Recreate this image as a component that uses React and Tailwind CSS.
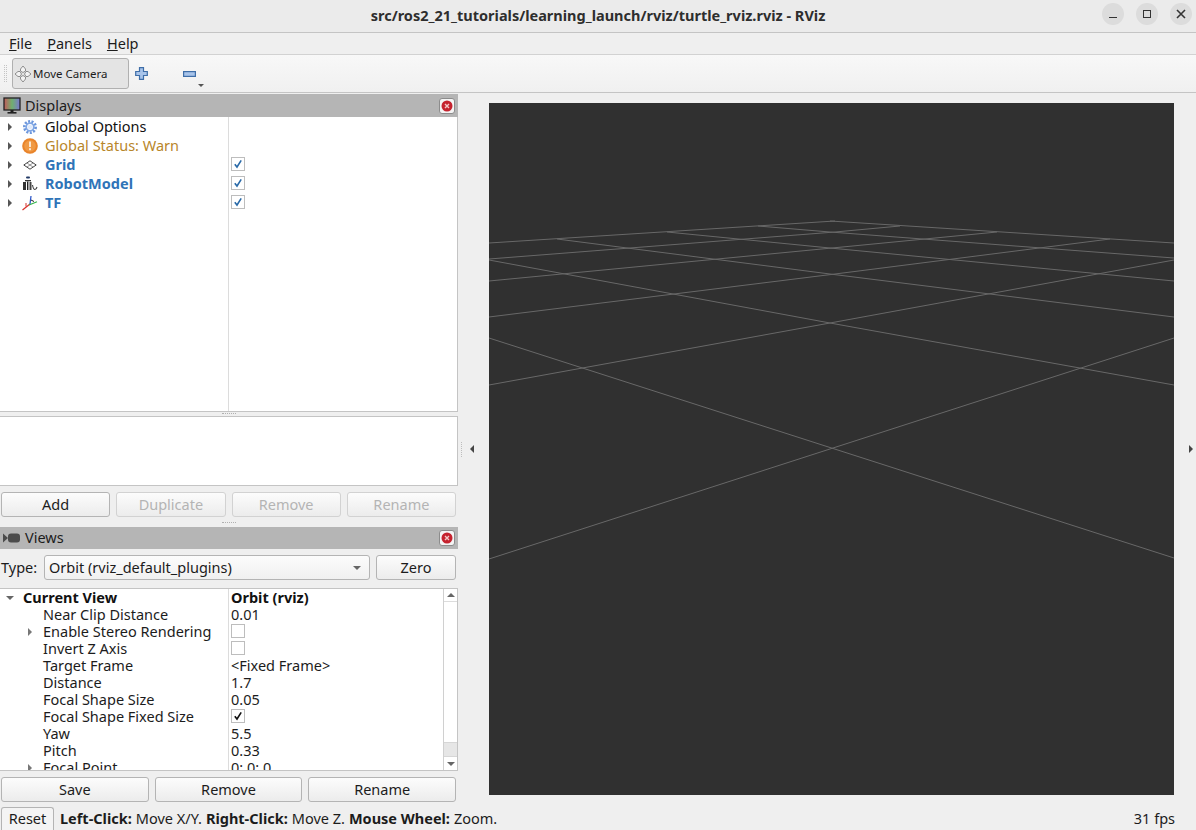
const font = "font-['Noto_Sans',sans-serif]";

const gridLines = [
  [489, 559, 1174, 338],
  [489, 338, 1174, 558],
  [489, 385, 830, 323],
  [830, 323, 1174, 260],
  [489, 317, 835, 274],
  [835, 274, 1110, 239],
  [489, 281, 832, 248],
  [832, 248, 997, 232],
  [489, 259, 835, 232],
  [835, 232, 900, 226],
  [489, 243, 835, 221],
  [489, 260, 830, 323],
  [830, 323, 1174, 385],
  [557, 239, 830, 274],
  [830, 274, 1174, 317],
  [667, 232, 830, 248],
  [830, 248, 1174, 281],
  [758, 226, 830, 232],
  [830, 232, 1174, 258],
  [830, 221, 1174, 243],
];

function MonitorIcon() {
  return (
    <svg width="18" height="18" viewBox="0 0 18 18" className="shrink-0">
      <defs>
        <linearGradient id="screen" x1="0" y1="0" x2="1" y2="0">
          <stop offset="0" stopColor="#c45a5a" />
          <stop offset="0.5" stopColor="#6fb06f" />
          <stop offset="1" stopColor="#7a78d0" />
        </linearGradient>
      </defs>
      <rect x="1" y="1" width="16" height="12" fill="url(#screen)" stroke="#222" strokeWidth="1.3" />
      <rect x="7.5" y="13" width="3" height="2" fill="#222" />
      <rect x="4.5" y="15" width="9" height="1.6" fill="#222" />
    </svg>
  );
}

function GearIcon() {
  return (
    <svg width="14" height="14" viewBox="0 0 14 14">
      <circle cx="7" cy="7" r="5.6" fill="none" stroke="#6d97dc" strokeWidth="2.8" strokeDasharray="2 1.4" />
      <circle cx="7" cy="7" r="3.8" fill="none" stroke="#7fa6e4" strokeWidth="1.8" />
      <circle cx="7" cy="7" r="2.2" fill="#dfe9f9" />
    </svg>
  );
}

function WarnIcon() {
  return (
    <svg width="16" height="16" viewBox="0 0 16 16">
      <circle cx="8" cy="8" r="7.8" fill="#e9842a" />
      <circle cx="8" cy="8" r="5.8" fill="#f09a45" />
      <rect x="7" y="3.5" width="2" height="5.5" fill="#fbe6cf" />
      <rect x="7" y="10.2" width="2" height="2" fill="#fbe6cf" />
    </svg>
  );
}

function GridIcon() {
  return (
    <svg width="14" height="10" viewBox="0 0 14 10">
      <path d="M7 .8 13.2 5 7 9.2.8 5Z" fill="none" stroke="#444" strokeWidth="1" />
      <path d="M4 3 10 7M10 3 4 7" fill="none" stroke="#777" strokeWidth="0.8" />
    </svg>
  );
}

function RobotIcon() {
  return (
    <svg width="16" height="15" viewBox="0 0 16 15">
      <rect x="4" y="0.5" width="4" height="2" rx="1" fill="#223a66" />
      <rect x="3" y="4" width="6" height="1.3" fill="#333" />
      <rect x="1" y="6" width="3" height="8" fill="#333" />
      <rect x="5" y="5.5" width="1.4" height="8.5" fill="#222" />
      <rect x="7.5" y="6" width="2" height="8" fill="#444" />
      <path d="M10.5 9c.5 3 1.5 4.5 2.5 4.5s1.6-1 2-2.5" fill="none" stroke="#444" strokeWidth="1.1" />
    </svg>
  );
}

function TfIcon() {
  return (
    <svg width="17" height="16" viewBox="0 0 17 16">
      <path d="M9 9 1.5 15" stroke="#d8302c" strokeWidth="1.2" fill="none" />
      <path d="M5 11.5 5 8" stroke="#d8302c" strokeWidth="1" fill="none" />
      <path d="M8 10 16 6.8" stroke="#35b54a" strokeWidth="1.2" fill="none" />
      <path d="M9 9 10 1" stroke="#2a55c8" strokeWidth="1.2" fill="none" />
      <path d="M10 5 13 6.5" stroke="#222" strokeWidth="1" fill="none" />
    </svg>
  );
}

function CloseBadge() {
  return (
    <div className="flex h-[16px] w-[16px] items-center justify-center rounded-[3px] border border-[#8c8c8c] bg-[#f4f4f4]">
      <svg width="12" height="12" viewBox="0 0 12 12">
        <circle cx="6" cy="6" r="5.5" fill="#c5222e" />
        <path d="M4 4 8 8M8 4 4 8" stroke="#f3c7c7" strokeWidth="1.4" />
      </svg>
    </div>
  );
}

function MoveIcon() {
  return (
    <svg width="18" height="18" viewBox="0 0 18 18" className="shrink-0">
      <path d="M6.5 4 9 1l2.5 3v2L9 7.5 6.5 6Z" fill="#f3f3f3" stroke="#777" strokeWidth="0.8" />
      <path d="M6.5 14 9 17l2.5-3v-2L9 10.5 6.5 12Z" fill="#f3f3f3" stroke="#777" strokeWidth="0.8" />
      <path d="M4 6.5 1 9l3 2.5h2L7.5 9 6 6.5Z" fill="#f3f3f3" stroke="#777" strokeWidth="0.8" />
      <path d="M14 6.5 17 9l-3 2.5h-2L10.5 9 12 6.5Z" fill="#f3f3f3" stroke="#777" strokeWidth="0.8" />
    </svg>
  );
}

function Arrow({ down, className = "" }) {
  if (down) {
    return <div className={"h-0 w-0 border-x-[4px] border-t-[4px] border-x-transparent border-t-[#666] " + className} />;
  }
  return <div className={"h-0 w-0 border-y-[4px] border-l-[4px] border-y-transparent border-l-[#555] " + className} />;
}

function Check({ on, color = "#2a6aa8" }) {
  return (
    <div className="mb-[2px] flex h-[14px] w-[14px] items-center justify-center border border-[#bdbdbd] bg-white">
      {on && (
        <svg width="10" height="10" viewBox="0 0 10 10">
          <path d="M1.8 5.2 4 8 8.2 1.4" fill="none" stroke={color} strokeWidth="1.6" />
        </svg>
      )}
    </div>
  );
}

function Btn({ children, disabled, className = "" }) {
  return (
    <button
      className={
        "flex h-[25px] items-center justify-center rounded-[3px] border bg-gradient-to-b from-[#fcfcfc] to-[#ececec] text-[14.5px] " +
        (disabled ? "border-[#d2d2d2] text-[#b4b4b4] " : "border-[#b4b4b4] text-[#1c1c1c] ") +
        className
      }
    >
      {children}
    </button>
  );
}

function Splitter({ className = "" }) {
  return <div className={"w-[14px] border-t border-dotted border-[#b0b0b0] " + className} />;
}

function PanelHeader({ icon, title, className = "" }) {
  return (
    <div className={"flex items-center justify-between bg-[#b5b5b5] pl-[3px] pr-[3px] " + className}>
      <div className="flex items-center gap-[4px] text-[14.5px] text-[#1c1c1c]">
        {icon}
        <span>{title}</span>
      </div>
      <CloseBadge />
    </div>
  );
}

const displays = [
  { icon: <GearIcon />, label: "Global Options", cls: "text-[#111]" },
  { icon: <WarnIcon />, label: "Global Status: Warn", cls: "text-[#b8862a]" },
  { icon: <GridIcon />, label: "Grid", cls: "font-bold text-[#2f74b8]", check: true },
  { icon: <RobotIcon />, label: "RobotModel", cls: "font-bold text-[#2f74b8]", check: true },
  { icon: <TfIcon />, label: "TF", cls: "font-bold text-[#2f74b8]", check: true },
];

const views = [
  { label: "Near Clip Distance", value: "0.01" },
  { label: "Enable Stereo Rendering", arrow: true, box: "off" },
  { label: "Invert Z Axis", box: "off" },
  { label: "Target Frame", value: "<Fixed Frame>" },
  { label: "Distance", value: "1.7" },
  { label: "Focal Shape Size", value: "0.05" },
  { label: "Focal Shape Fixed Size", box: "on" },
  { label: "Yaw", value: "5.5" },
  { label: "Pitch", value: "0.33" },
  { label: "Focal Point", arrow: true, value: "0; 0; 0" },
];

function DisplaysPanel() {
  return (
    <>
      <PanelHeader icon={<MonitorIcon />} title="Displays" className="h-[23px]" />
      <div className="flex h-[295px] border-b border-r border-[#c4c4c4] bg-white text-[14.5px]">
        <div className="w-[229px] border-r border-[#dcdcdc]">
          {displays.map((d) => (
            <div key={d.label} className="flex h-[19px] items-center">
              <Arrow className="ml-[8px]" />
              <div className="flex w-[33px] shrink-0 items-center justify-center pl-[2px]">{d.icon}</div>
              <span className={d.cls}>{d.label}</span>
            </div>
          ))}
        </div>
        <div className="flex-1 pl-[2px]">
          {displays.map((d) => (
            <div key={d.label} className="flex h-[19px] items-center">
              {d.check && <Check on />}
            </div>
          ))}
        </div>
      </div>
    </>
  );
}

function ViewsTree() {
  return (
    <div className="flex h-[183px] overflow-hidden border border-l-0 border-[#c4c4c4] bg-white text-[14.5px] text-[#1c1c1c]">
      <div className="w-[229px] shrink-0 overflow-hidden border-r border-[#dcdcdc]">
        <div className="flex h-[17px] items-center font-bold text-[#111]">
          <Arrow down className="ml-[6px]" />
          <span className="ml-[9px]">Current View</span>
        </div>
        {views.map((v) => (
          <div key={v.label} className="relative flex h-[17px] items-center pl-[43px]">
            {v.arrow && <Arrow className="absolute left-[28px] top-[5px] border-l-[#777]" />}
            <span className="whitespace-nowrap">{v.label}</span>
          </div>
        ))}
      </div>
      <div className="flex-1 overflow-hidden pl-[2px]">
        <div className="flex h-[17px] items-center font-bold text-[#111]">Orbit (rviz)</div>
        {views.map((v) => (
          <div key={v.label} className="flex h-[17px] items-center">
            {v.box ? <Check on={v.box === "on"} color="#111" /> : v.value}
          </div>
        ))}
      </div>
      <div className="flex w-[14px] shrink-0 flex-col border-l border-[#d0d0d0] bg-white">
        <div className="flex h-[13px] items-center justify-center border-b border-[#dcdcdc]">
          <div className="h-0 w-0 border-x-[4px] border-b-[4px] border-x-transparent border-b-[#666]" />
        </div>
        <div className="flex-1" />
        <div className="h-[15px] border-y border-[#d6d6d6] bg-[#e6e6e6]" />
        <div className="flex h-[13px] items-center justify-center">
          <Arrow down />
        </div>
      </div>
    </div>
  );
}

export default function App() {
  return (
    <div className={"flex h-[830px] w-[1196px] flex-col overflow-hidden bg-[#efefef] text-[14.5px] text-[#1c1c1c] " + font}>
      {/* title bar */}
      <div className="relative flex h-[33px] shrink-0 items-center justify-center border-b border-[#c4c4c4] bg-[#ebebeb]">
        <span className="text-[14.5px] font-bold text-[#2e2e2e]">src/ros2_21_tutorials/learning_launch/rviz/turtle_rviz.rviz - RViz</span>
        <div className="absolute right-[4px] top-[3px] flex gap-[12px]">
          <div className="flex h-[22px] w-[22px] items-center justify-center rounded-full bg-[#dcdcdc]">
            <div className="mt-[7px] h-[1.5px] w-[8px] bg-[#333]" />
          </div>
          <div className="flex h-[22px] w-[22px] items-center justify-center rounded-full bg-[#dcdcdc]">
            <div className="h-[8px] w-[8px] border-[1.5px] border-[#333]" />
          </div>
          <div className="flex h-[22px] w-[22px] items-center justify-center rounded-full bg-[#dcdcdc]">
            <svg width="10" height="10" viewBox="0 0 10 10">
              <path d="M1 1 9 9M9 1 1 9" stroke="#333" strokeWidth="1.6" />
            </svg>
          </div>
        </div>
      </div>

      {/* menu bar */}
      <div className="flex h-[22px] shrink-0 items-center gap-[15px] border-b border-[#d2d2d2] bg-[#efefef] pl-[9px]">
        <span><span className="underline">F</span>ile</span>
        <span><span className="underline">P</span>anels</span>
        <span><span className="underline">H</span>elp</span>
      </div>

      {/* tool bar */}
      <div className="flex h-[38px] shrink-0 items-center border-b border-[#c4c4c4] bg-gradient-to-b from-[#f8f8f8] to-[#f0f0f0] pl-[4px]">
        <div className="h-[17px] w-[3px] border-x border-dotted border-[#c4c4c4]" />
        <div className="ml-[5px] flex h-[31px] w-[117px] items-center gap-[1px] rounded-[3px] border border-[#b0b0b0] bg-[#e4e4e4] pl-[1px] text-[11.5px]">
          <MoveIcon />
          <span>Move Camera</span>
        </div>
        <svg width="13" height="13" viewBox="0 0 13 13" className="ml-[6px]">
          <path d="M4.5 .7H8.5V4.5H12.3V8.5H8.5V12.3H4.5V8.5H.7V4.5H4.5Z" fill="#a8c4ea" stroke="#3f6ea8" strokeWidth="1.2" />
        </svg>
        <svg width="13" height="6" viewBox="0 0 13 6" className="ml-[35px]">
          <rect x=".6" y=".6" width="11.8" height="4.8" fill="#a8c4ea" stroke="#3f6ea8" strokeWidth="1.2" />
        </svg>
        <div className="ml-[2px] mt-[24px] h-0 w-0 border-x-[3px] border-t-[3px] border-x-transparent border-t-[#555]" />
      </div>

      {/* main area */}
      <div className="flex min-h-0 flex-1">
        <div className="flex w-[458px] shrink-0 flex-col pt-[1px]">
          <DisplaysPanel />
          <div className="flex h-[4px] justify-center">
            <Splitter className="mt-[1px]" />
          </div>
          <div className="h-[70px] border border-l-0 border-[#c4c4c4] bg-white" />
          <div className="mt-[6px] flex gap-[6px] pl-[1px] pr-[2px]">
            <Btn className="flex-1">Add</Btn>
            <Btn disabled className="flex-1">Duplicate</Btn>
            <Btn disabled className="flex-1">Remove</Btn>
            <Btn disabled className="flex-1">Rename</Btn>
          </div>
          <div className="flex h-[10px] items-center justify-center">
            <Splitter />
          </div>
          <PanelHeader
            title="Views"
            className="h-[22px]"
            icon={
              <svg width="18" height="12" viewBox="0 0 18 12" className="shrink-0">
                <path d="M0 1.5 5 6 0 10.5Z" fill="#4c4c4c" />
                <rect x="5" y="1.5" width="12" height="9" rx="3" fill="#4c4c4c" />
              </svg>
            }
          />
          <div className="mt-[6px] flex h-[25px] items-center pl-[1px] pr-[2px]">
            <span className="w-[43px] shrink-0">Type:</span>
            <div className="flex h-[25px] flex-1 items-center justify-between rounded-[3px] border border-[#b4b4b4] bg-gradient-to-b from-[#fcfcfc] to-[#f0f0f0] pl-[4px] pr-[8px]">
              <span>Orbit (rviz_default_plugins)</span>
              <Arrow down />
            </div>
            <Btn className="ml-[6px] w-[80px]">Zero</Btn>
          </div>
          <div className="mt-[8px]">
            <ViewsTree />
          </div>
          <div className="mt-[6px] flex gap-[6px] pl-[1px] pr-[2px]">
            <Btn className="flex-1">Save</Btn>
            <Btn className="flex-1">Remove</Btn>
            <Btn className="flex-1">Rename</Btn>
          </div>
        </div>

        {/* left collapse handle */}
        <div className="flex w-[31px] shrink-0 items-center pl-[3px]">
          <div className="h-[15px] w-0 border-l border-dotted border-[#bdbdbd]" />
          <div className="ml-[8px] h-0 w-0 border-y-[4px] border-r-[4px] border-y-transparent border-r-[#444]" />
        </div>

        <div className="my-[10px] h-[692px] w-[685px] shrink-0 bg-[#303030]">
          <svg width="685" height="692" viewBox="489 103 685 692" className="block">
            {gridLines.map((l, i) => (
              <line key={i} x1={l[0]} y1={l[1]} x2={l[2]} y2={l[3]} stroke="#686868" strokeWidth="1" />
            ))}
          </svg>
        </div>

        {/* right collapse handle */}
        <div className="flex flex-1 items-center pl-[15px]">
          <div className="h-0 w-0 border-y-[4px] border-l-[4px] border-y-transparent border-l-[#444]" />
        </div>
      </div>

      {/* status bar */}
      <div className="flex h-[25px] shrink-0 items-end pl-[1px] pr-[21px]">
        <div className="flex h-[23px] w-[53px] items-center justify-center rounded-t-[3px] border border-b-0 border-[#b4b4b4] bg-[#f4f4f4]">Reset</div>
        <div className="ml-[6px] flex h-[23px] items-center">
          <span className="font-bold">Left-Click:</span>
          <span className="ml-[4px]">Move X/Y.</span>
          <span className="ml-[4px] font-bold">Right-Click:</span>
          <span className="ml-[4px]">Move Z.</span>
          <span className="ml-[4px] font-bold">Mouse Wheel:</span>
          <span className="ml-[4px]">Zoom.</span>
        </div>
        <div className="ml-auto flex h-[23px] items-center">31 fps</div>
      </div>
    </div>
  );
}
